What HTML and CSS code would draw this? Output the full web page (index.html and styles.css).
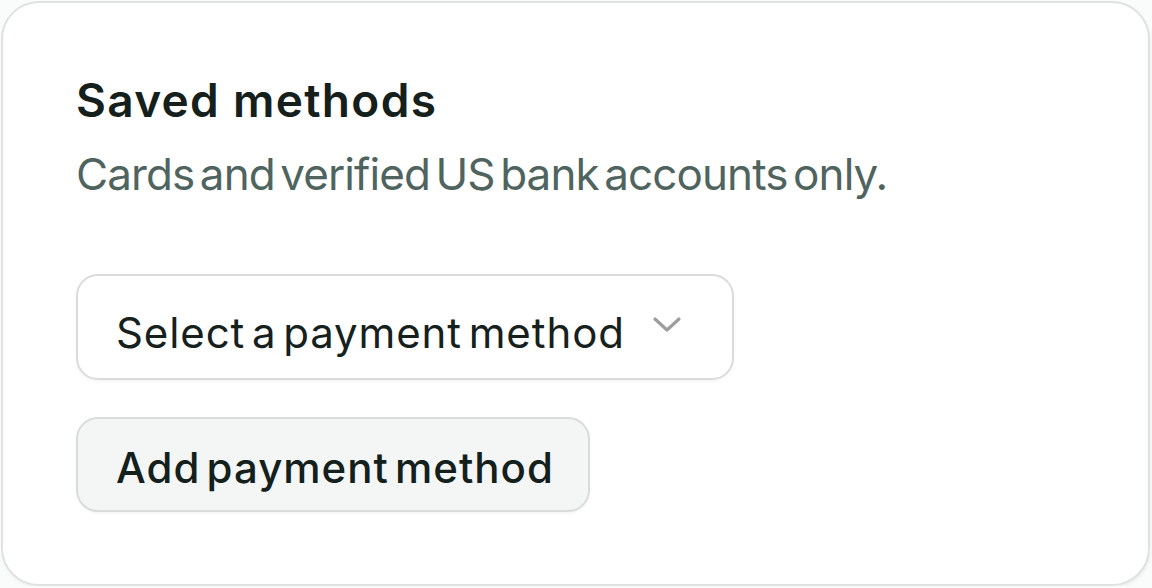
FILE: index.html
```html
<!DOCTYPE html>
<html lang="en">
<head>
<meta charset="utf-8">
<title>Saved methods</title>
<link rel="stylesheet" href="styles.css">
</head>
<body>
<section class="card">
  <h2 class="title">Saved methods</h2>
  <p class="subtitle">Cards and verified US bank accounts only.</p>
  <div class="select">
    <span class="select-label">Select a payment method</span>
    <svg class="chevron" width="30" height="18" viewBox="0 0 30 18" aria-hidden="true">
      <path d="M3 3 L15 14 L27 3" fill="none" stroke="#9c9e9d" stroke-width="3.2" stroke-linecap="round" stroke-linejoin="round"/>
    </svg>
  </div>
  <button class="btn">Add payment method</button>
</section>
</body>
</html>
```
FILE: styles.css
```css
html, body {
  margin: 0;
  padding: 0;
  background: #fafbfb;
}
body {
  padding: 1px 0 0 1px;
  font-family: Inter, "Noto Sans", sans-serif;
}
.card {
  box-sizing: border-box;
  width: 1149px;
  height: 585px;
  background: #ffffff;
  border: 2px solid #dfe2e1;
  border-radius: 38px;
  box-shadow: 1px 2px 3px rgba(0, 0, 0, 0.05);
  padding: 69px 0 0 73px;
  display: flex;
  flex-direction: column;
  align-items: flex-start;
}
.title {
  margin: 0;
  font-size: 46px;
  line-height: 56px;
  font-weight: 600;
  color: #15201c;
  letter-spacing: 1.3px;
}
.subtitle {
  margin: 20px 0 0;
  font-size: 44px;
  line-height: 52px;
  font-weight: 400;
  color: #50645f;
  letter-spacing: -0.9px;
  word-spacing: -6px;
}
.select {
  box-sizing: border-box;
  margin-top: 74px;
  width: 658px;
  height: 106px;
  border: 2px solid #dadcdb;
  border-radius: 22px;
  box-shadow: 0 2px 3px rgba(0, 0, 0, 0.04);
  padding: 32px 50px 20px 38px;
  display: flex;
  align-items: flex-start;
}
.select-label {
  font-size: 42px;
  line-height: 50px;
  color: #16211d;
  letter-spacing: 0.9px;
  word-spacing: -6px;
}
.chevron {
  margin-left: auto;
  margin-top: 8px;
}
.btn {
  box-sizing: border-box;
  margin-top: 37px;
  width: 514px;
  height: 95px;
  background: #f3f6f5;
  border: 2px solid #d9dcdb;
  border-radius: 22px;
  box-shadow: 0 2px 3px rgba(0, 0, 0, 0.04);
  padding: 24px 0 17px 38px;
  text-align: left;
  font-family: Inter, "Noto Sans", sans-serif;
  font-size: 42px;
  line-height: 50px;
  font-weight: 500;
  color: #14201c;
  letter-spacing: 1px;
  word-spacing: -6px;
}
```
